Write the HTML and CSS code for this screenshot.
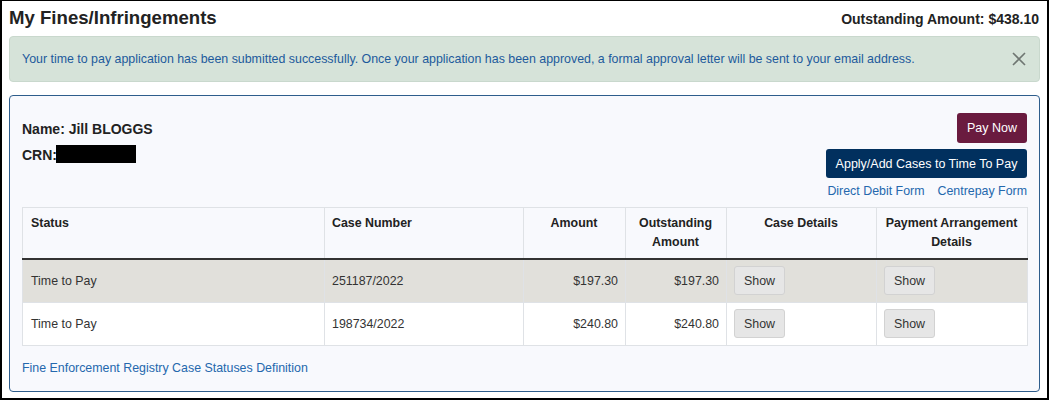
FILE: index.html
```html
<!DOCTYPE html>
<html lang="en">
<head>
<meta charset="utf-8">
<title>My Fines/Infringements</title>
<link rel="stylesheet" href="styles.css">
</head>
<body>
<div class="frame">
  <header class="page-head">
    <h1 class="title">My Fines/Infringements</h1>
    <div class="total">Outstanding Amount: $438.10</div>
  </header>

  <div class="alert">
    <span class="alert-text">Your time to pay application has been submitted successfully. Once your application has been approved, a formal approval letter will be sent to your email address.</span>
    <button class="close" aria-label="Close">
      <svg width="14" height="14" viewBox="0 0 14 14"><path d="M1 1L13 13M13 1L1 13" stroke="#6f7672" stroke-width="1.6" fill="none"/></svg>
    </button>
  </div>

  <section class="panel">
    <div class="panel-top">
      <div class="person">
        <div class="line">Name: Jill BLOGGS</div>
        <div class="line">CRN:<span class="redact"></span></div>
      </div>
      <div class="actions">
        <button class="btn btn-pay">Pay Now</button>
        <button class="btn btn-apply">Apply/Add Cases to Time To Pay</button>
        <div class="links">
          <a href="#">Direct Debit Form</a>
          <a href="#">Centrepay Form</a>
        </div>
      </div>
    </div>

    <table class="cases">
      <colgroup>
        <col class="c1"><col class="c2"><col class="c3"><col class="c4"><col class="c5"><col class="c6">
      </colgroup>
      <thead>
        <tr>
          <th>Status</th>
          <th>Case Number</th>
          <th class="center">Amount</th>
          <th class="center">Outstanding Amount</th>
          <th class="center">Case Details</th>
          <th class="center">Payment Arrangement Details</th>
        </tr>
      </thead>
      <tbody>
        <tr class="shade">
          <td>Time to Pay</td>
          <td>251187/2022</td>
          <td class="num">$197.30</td>
          <td class="num">$197.30</td>
          <td><button class="btn-show">Show</button></td>
          <td><button class="btn-show">Show</button></td>
        </tr>
        <tr>
          <td>Time to Pay</td>
          <td>198734/2022</td>
          <td class="num">$240.80</td>
          <td class="num">$240.80</td>
          <td><button class="btn-show">Show</button></td>
          <td><button class="btn-show">Show</button></td>
        </tr>
      </tbody>
    </table>

    <a class="def-link" href="#">Fine Enforcement Registry Case Statuses Definition</a>
  </section>
</div>
</body>
</html>
```

FILE: styles.css
```css
html, body {
  margin: 0;
  padding: 0;
}
body {
  font-family: "Liberation Sans", Arial, sans-serif;
  font-size: 12.4px;
  color: #333;
  background: #fff;
}
.frame {
  box-sizing: border-box;
  width: 1049px;
  height: 400px;
  border-style: solid;
  border-color: #000;
  border-width: 1px 2px 2px 2px;
  padding: 0 7px;
  display: flex;
  flex-direction: column;
}
.page-head {
  display: flex;
  justify-content: space-between;
  align-items: baseline;
  height: 35px;
  padding-top: 6px;
  box-sizing: border-box;
}
.title {
  margin: 0;
  font-size: 18.6px;
  font-weight: bold;
  color: #222;
  line-height: 22px;
}
.total {
  font-size: 14px;
  font-weight: bold;
  color: #222;
  padding-right: 1px;
}
.alert {
  box-sizing: border-box;
  height: 46px;
  border: 1px solid #c9d8cd;
  background: #d6e3d9;
  border-radius: 4px;
  display: flex;
  align-items: center;
  justify-content: space-between;
  padding: 0 13px 0 12px;
  color: #1d5a9c;
  font-size: 12.4px;
}
.close {
  border: 0;
  background: none;
  padding: 0;
  width: 14px;
  height: 14px;
  display: flex;
}
.panel {
  margin-top: 13px;
  box-sizing: border-box;
  height: 297px;
  border: 1px solid #2e5d8c;
  border-radius: 4px;
  background: #f8f9fd;
  padding: 17px 12px 0 12px;
}
.panel-top {
  display: flex;
  justify-content: space-between;
  height: 94px;
}
.person {
  padding-top: 6px;
}
.line {
  font-size: 14px;
  font-weight: bold;
  color: #222;
  line-height: 20px;
  height: 26px;
  display: flex;
  align-items: flex-start;
}
.redact {
  display: inline-block;
  width: 80px;
  height: 18px;
  background: #000;
  margin-left: -1px;
  margin-top: 0;
}
.actions {
  display: flex;
  flex-direction: column;
  align-items: flex-end;
}
.btn {
  font-family: inherit;
  font-size: 12.5px;
  color: #fff;
  border: 0;
  border-radius: 3px;
  padding: 0 11px;
  white-space: nowrap;
  cursor: pointer;
}
.btn-pay {
  background: #6a1b3f;
  height: 30px;
  width: 70px;
  padding: 0;
}
.btn-apply {
  background: #01305e;
  height: 29px;
  margin-top: 6px;
  width: 201px;
  padding: 0;
}
.links {
  margin-top: 6px;
  display: flex;
  gap: 13px;
  font-size: 12.4px;
  line-height: 14px;
}
.links a, .def-link {
  color: #2468ad;
  text-decoration: none;
}
.cases {
  width: 1005px;
  border-collapse: collapse;
  table-layout: fixed;
  border: 1px solid #dfe2e6;
  background: #f8f9fd;
}
.c1 { width: 302px; }
.c2 { width: 199px; }
.c3 { width: 102px; }
.c4 { width: 101px; }
.c5 { width: 150px; }
.c6 { width: 151px; }
.cases th {
  font-weight: bold;
  font-size: 12.4px;
  color: #222;
  text-align: left;
  vertical-align: top;
  padding: 6px 8px 0 7px;
  height: 44px;
  line-height: 19px;
  border-left: 1px solid #dfe2e6;
  border-bottom: 2px solid #333;
}
.cases th:first-child {
  padding-left: 8px;
}
.cases th.center {
  text-align: center;
}
.cases td {
  padding: 6px 7px 7px 7px;
  height: 29px;
  line-height: 14px;
  border-left: 1px solid #dfe2e6;
  border-top: 1px solid #dfe2e6;
  background: #fff;
}
.cases td:first-child {
  padding-left: 8px;
}
.cases tr.shade td {
  background: #e1e0db;
  border-top: 0;
}
.cases td.num {
  text-align: right;
}
.btn-show {
  font-family: inherit;
  font-size: 12.4px;
  color: #333;
  background: #e6e6e6;
  border: 1px solid #d2d2d2;
  border-radius: 3px;
  width: 51px;
  height: 29px;
  padding: 0;
  vertical-align: middle;
}
.def-link {
  display: block;
  margin-top: 15px;
  font-size: 12.4px;
  line-height: 14px;
}
```
